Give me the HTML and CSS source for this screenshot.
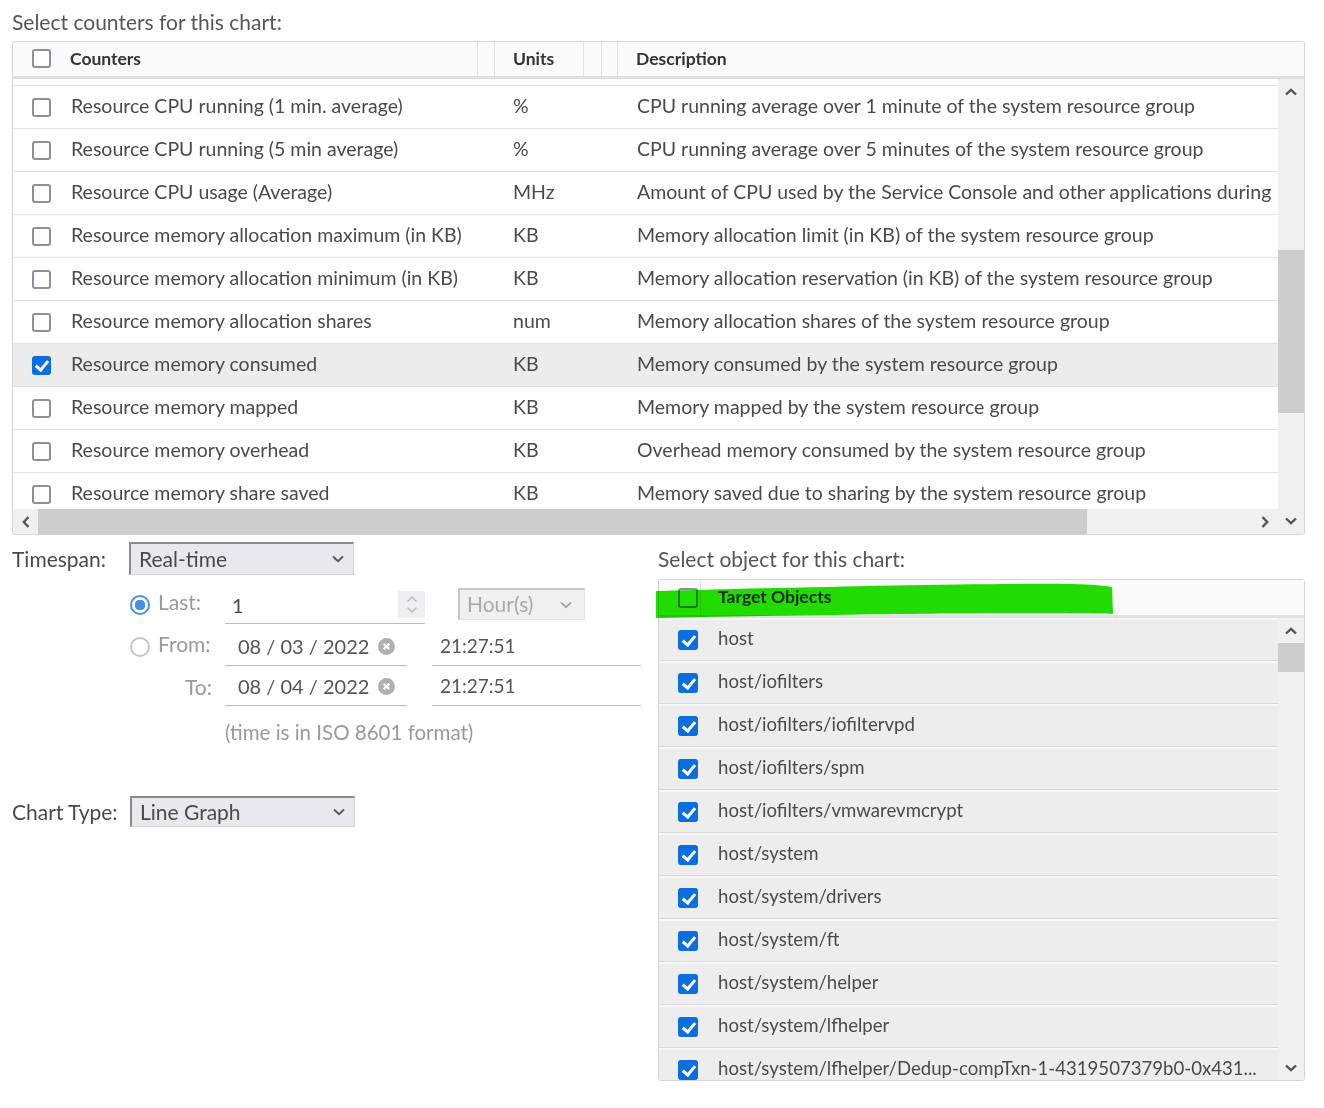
FILE: index.html
```html
<!DOCTYPE html>
<html lang="en">
<head>
    <meta charset="UTF-8">
    <title>Chart Options</title>
    <link rel="stylesheet" href="styles.css">
</head>
<body>
<div class="page">
    <p class="caption">Select counters for this chart:</p>

    <div class="counters">
        <div class="grid-head">
            <div class="hc hc-name"><span class="cb"></span>Counters</div>
            <div class="hc hc-gap1"></div>
            <div class="hc hc-units">Units</div>
            <div class="hc hc-gap2"></div>
            <div class="hc hc-gap3"></div>
            <div class="hc hc-desc">Description</div>
        </div>
        <div class="grid-main">
            <div class="grid-view">
                <div class="grid-rows">
                    <div class="row"><span class="cb"></span><span class="c-name">Resource CPU running (1 min. average)</span><span class="c-unit">%</span><span class="c-desc">CPU running average over 1 minute of the system resource group</span></div>
                    <div class="row"><span class="cb"></span><span class="c-name">Resource CPU running (5 min average)</span><span class="c-unit">%</span><span class="c-desc">CPU running average over 5 minutes of the system resource group</span></div>
                    <div class="row"><span class="cb"></span><span class="c-name">Resource CPU usage (Average)</span><span class="c-unit">MHz</span><span class="c-desc">Amount of CPU used by the Service Console and other applications during</span></div>
                    <div class="row"><span class="cb"></span><span class="c-name">Resource memory allocation maximum (in KB)</span><span class="c-unit">KB</span><span class="c-desc">Memory allocation limit (in KB) of the system resource group</span></div>
                    <div class="row"><span class="cb"></span><span class="c-name">Resource memory allocation minimum (in KB)</span><span class="c-unit">KB</span><span class="c-desc">Memory allocation reservation (in KB) of the system resource group</span></div>
                    <div class="row"><span class="cb"></span><span class="c-name">Resource memory allocation shares</span><span class="c-unit">num</span><span class="c-desc">Memory allocation shares of the system resource group</span></div>
                    <div class="row sel"><span class="cb on"></span><span class="c-name">Resource memory consumed</span><span class="c-unit">KB</span><span class="c-desc">Memory consumed by the system resource group</span></div>
                    <div class="row"><span class="cb"></span><span class="c-name">Resource memory mapped</span><span class="c-unit">KB</span><span class="c-desc">Memory mapped by the system resource group</span></div>
                    <div class="row"><span class="cb"></span><span class="c-name">Resource memory overhead</span><span class="c-unit">KB</span><span class="c-desc">Overhead memory consumed by the system resource group</span></div>
                    <div class="row"><span class="cb"></span><span class="c-name">Resource memory share saved</span><span class="c-unit">KB</span><span class="c-desc">Memory saved due to sharing by the system resource group</span></div>
                </div>
                <div class="hscroll">
                    <div class="sb-arrow"><svg width="8" height="12" viewBox="0 0 8 12"><path d="M6.5 1 L1.8 6 L6.5 11" fill="none" stroke="#555" stroke-width="2.4"/></svg></div>
                    <div class="hs-thumb"></div>
                    <div class="hs-track"></div>
                    <div class="sb-arrow"><svg width="8" height="12" viewBox="0 0 8 12"><path d="M1.5 1 L6.2 6 L1.5 11" fill="none" stroke="#555" stroke-width="2.4"/></svg></div>
                </div>
            </div>
            <div class="vscroll counters-vs">
                <div class="sb-arrow"><svg width="12" height="8" viewBox="0 0 12 8"><path d="M1 6.5 L6 1.8 L11 6.5" fill="none" stroke="#555" stroke-width="2.4"/></svg></div>
                <div class="vs-track"><div class="vs-thumb"></div></div>
                <div class="sb-arrow"><svg width="12" height="8" viewBox="0 0 12 8"><path d="M1 1.5 L6 6.2 L11 1.5" fill="none" stroke="#555" stroke-width="2.4"/></svg></div>
            </div>
        </div>
    </div>

    <div class="lower">
        <div class="left">
            <div class="ts-row">
                <span class="lbl">Timespan:</span>
                <div class="select">Real-time<svg width="12" height="8" viewBox="0 0 12 8"><path d="M1 1.5 L6 6.2 L11 1.5" fill="none" stroke="#555" stroke-width="1.8"/></svg></div>
            </div>

            <div class="opt-row last-row">
                <div class="opt"><span class="radio on"></span><span class="opt-lbl up">Last:</span></div>
                <div class="field num">
                    <span class="val">1</span>
                    <span class="spin">
                        <svg width="12" height="8" viewBox="0 0 12 8"><path d="M1.5 6.5 L6 2 L10.5 6.5" fill="none" stroke="#b8b8b8" stroke-width="1.4"/></svg>
                        <svg width="12" height="8" viewBox="0 0 12 8"><path d="M1.5 1.5 L6 6 L10.5 1.5" fill="none" stroke="#b8b8b8" stroke-width="1.4"/></svg>
                    </span>
                </div>
                <div class="select hours">Hour(s)<svg width="12" height="8" viewBox="0 0 12 8"><path d="M1 1.5 L6 6.2 L11 1.5" fill="none" stroke="#9a9a9a" stroke-width="1.6"/></svg></div>
            </div>

            <div class="opt-row from-row">
                <div class="opt"><span class="radio"></span><span class="opt-lbl up">From:</span></div>
                <div class="field date"><span class="val">08 / 03 / 2022</span><span class="clear"><svg width="17" height="17" viewBox="0 0 17 17"><circle cx="8.5" cy="8.5" r="8.5" fill="#b0b0b0"/><path d="M5.7 5.7 L11.3 11.3 M11.3 5.7 L5.7 11.3" stroke="#fff" stroke-width="2.2"/></svg></span></div>
                <div class="field time"><span class="val">21:27:51</span></div>
            </div>

            <div class="opt-row to-row">
                <div class="opt to"><span class="opt-lbl">To:</span></div>
                <div class="field date"><span class="val">08 / 04 / 2022</span><span class="clear"><svg width="17" height="17" viewBox="0 0 17 17"><circle cx="8.5" cy="8.5" r="8.5" fill="#b0b0b0"/><path d="M5.7 5.7 L11.3 11.3 M11.3 5.7 L5.7 11.3" stroke="#fff" stroke-width="2.2"/></svg></span></div>
                <div class="field time"><span class="val">21:27:51</span></div>
            </div>

            <p class="note">(time is in ISO 8601 format)</p>

            <div class="ts-row chart-row">
                <span class="lbl">Chart Type:</span>
                <div class="select chart">Line Graph<svg width="12" height="8" viewBox="0 0 12 8"><path d="M1 1.5 L6 6.2 L11 1.5" fill="none" stroke="#555" stroke-width="1.8"/></svg></div>
            </div>
        </div>

        <div class="right">
            <p class="caption obj-caption">Select object for this chart:</p>
            <div class="objects">
                <div class="obj-head">
                    <span class="cb"></span>
                    <span class="obj-sep"></span>
                    <span class="obj-title">Target Objects</span>
                </div>
                <div class="obj-main">
                    <div class="obj-list">
                        <div class="obj-row"><span class="cb on"></span><span class="obj-name">host</span></div>
                        <div class="obj-row"><span class="cb on"></span><span class="obj-name">host/iofilters</span></div>
                        <div class="obj-row"><span class="cb on"></span><span class="obj-name">host/iofilters/iofiltervpd</span></div>
                        <div class="obj-row"><span class="cb on"></span><span class="obj-name">host/iofilters/spm</span></div>
                        <div class="obj-row"><span class="cb on"></span><span class="obj-name">host/iofilters/vmwarevmcrypt</span></div>
                        <div class="obj-row"><span class="cb on"></span><span class="obj-name">host/system</span></div>
                        <div class="obj-row"><span class="cb on"></span><span class="obj-name">host/system/drivers</span></div>
                        <div class="obj-row"><span class="cb on"></span><span class="obj-name">host/system/ft</span></div>
                        <div class="obj-row"><span class="cb on"></span><span class="obj-name">host/system/helper</span></div>
                        <div class="obj-row"><span class="cb on"></span><span class="obj-name">host/system/lfhelper</span></div>
                        <div class="obj-row"><span class="cb on"></span><span class="obj-name">host/system/lfhelper/Dedup-compTxn-1-4319507379b0-0x431...</span></div>
                    </div>
                    <div class="vscroll obj-vs">
                        <div class="sb-arrow"><svg width="12" height="8" viewBox="0 0 12 8"><path d="M1 6.5 L6 1.8 L11 6.5" fill="none" stroke="#555" stroke-width="2.4"/></svg></div>
                        <div class="vs-track"><div class="vs-thumb"></div></div>
                        <div class="sb-arrow"><svg width="12" height="8" viewBox="0 0 12 8"><path d="M1 1.5 L6 6.2 L11 1.5" fill="none" stroke="#555" stroke-width="2.4"/></svg></div>
                    </div>
                </div>
                <svg class="marker" width="460" height="36" viewBox="0 0 460 36"><path d="M1 8 C 120 5, 300 0, 410 1 C 430 1, 445 2, 457 4 L 458 31 C 420 30, 300 30, 180 32 C 100 33, 40 34, 1 35 Z" fill="#22e000"/></svg>
            </div>
        </div>
    </div>
</div>
</body>
</html>
```

FILE: styles.css
```css
*{margin:0;padding:0;box-sizing:border-box;}
body{font-family:"Lato","Open Sans",sans-serif;font-size:19px;color:#4a4a4a;background:#fff;}
.page{width:1305px;padding-left:12px;}

.caption{height:24px;line-height:24px;margin-top:10px;margin-bottom:7px;font-size:21px;color:#565656;}

/* checkbox */
.cb{position:relative;display:inline-block;flex:none;width:19px;height:19px;border:2px solid #8f8f9b;border-radius:3px;background:#fff;}
.cb.on{background:#0a6ee0;border-color:#0a6ee0;}
.cb.on::after{content:"";position:absolute;left:4px;top:0px;width:5px;height:10px;border:solid #fff;border-width:0 3px 3px 0;transform:rotate(40deg);}

/* counters grid */
.counters{height:494px;border:1px solid #d6d6d6;border-radius:3px;display:flex;flex-direction:column;overflow:hidden;}
.grid-head{flex:none;display:flex;height:37px;border-bottom:3px solid #dedede;background:#fafafa;font-size:17.5px;font-weight:700;color:#333;}
.hc{display:flex;align-items:center;padding-bottom:2px;border-right:1px solid #e3e3e3;}
.hc-name{width:465px;}
.hc-name .cb{margin:0 19px 0 19px;}
.hc-gap1{width:17px;}
.hc-units{width:89px;padding-left:18px;}
.hc-gap2{width:18px;}
.hc-gap3{width:16px;}
.hc-desc{flex:1;padding-left:18px;border-right:none;}

.grid-main{flex:1;display:flex;min-height:0;}
.grid-view{flex:1;display:flex;flex-direction:column;min-width:0;}
.grid-rows{flex:1;overflow:hidden;padding-top:6px;}
.row{display:flex;align-items:center;height:43px;padding-bottom:3px;border-top:1px solid #e2e2e2;white-space:nowrap;font-size:19.5px;}
.row .cb{margin:3px 20px 0 19px;}
.row.sel{background:#ececec;}
.c-name{flex:none;width:442px;}
.c-unit{flex:none;width:124px;}
.c-desc{flex:none;}

/* scrollbars */
.sb-arrow{flex:none;display:flex;align-items:center;justify-content:center;}
.hscroll{flex:none;height:25px;display:flex;background:#f0f0f0;}
.hscroll .sb-arrow{width:25px;}
.hscroll .sb-arrow:last-child{width:26px;}
.hs-thumb{width:1049px;background:#cdcdcd;}
.hs-track{flex:1;}
.vscroll{flex:none;width:26px;display:flex;flex-direction:column;background:#f0f0f0;}
.vscroll .sb-arrow{height:26px;}
.vs-track{flex:1;}
.counters-vs .vs-track{padding-top:145px;}
.counters-vs .vs-thumb{height:163px;background:#cdcdcd;}
.obj-vs .sb-arrow{height:25px;}
.obj-vs .vs-thumb{height:29px;background:#cdcdcd;}

/* lower part */
.lower{display:flex;gap:17px;}
.left{width:629px;}
.right{width:647px;}

.ts-row{display:flex;align-items:center;height:33px;margin-top:7px;font-size:21px;}
.lbl{width:117px;flex:none;color:#4a4a4a;}
.select{display:flex;align-items:center;justify-content:space-between;width:225px;height:33px;padding:0 9px 2px 8px;background:#e9e9ed;border-top:2px solid #8b8b8b;border-left:2px solid #8b8b8b;border-right:1px solid #d6d6d6;border-bottom:1px solid #d6d6d6;color:#4a4a4a;}
.select svg{margin-top:2px;}

.opt-row{display:flex;height:38px;margin-left:118px;font-size:20px;}
.last-row{margin-top:11px;}
.from-row{margin-top:4px;}
.to-row{margin-top:2px;}
.opt{width:95px;flex:none;display:flex;align-items:center;color:#9a9a9a;font-size:21px;}
.opt.to{justify-content:flex-end;padding-right:13px;padding-bottom:2px;}
.opt-lbl.up{padding-bottom:8px;}
.radio{flex:none;width:20px;height:20px;margin-right:8px;border:2px solid #c4c4c4;border-radius:50%;background:#fff;}
.radio.on{border-color:#4a90e2;background:radial-gradient(circle,#4a90e2 0 5px,#fff 5.5px);}

.field{display:flex;align-items:center;padding-bottom:2px;border-bottom:1px solid #bdbdbd;color:#555;}
.num{width:200px;padding-left:7px;}
.num .val{color:#4a4a4a;padding-top:2px;}
.spin{margin-left:auto;align-self:flex-start;margin-top:5px;width:27px;height:27px;background:#efeff1;display:flex;flex-direction:column;align-items:center;justify-content:center;gap:3px;}
.select.hours{width:127px;height:32px;margin:2px 0 0 33px;padding:0 12px 2px 7px;font-size:21px;background:#f0f0f0;border-top-color:#c6c6c6;border-left-color:#c6c6c6;border-right-color:#e2e2e2;border-bottom-color:#e2e2e2;color:#a9a9a9;}
.date{width:182px;padding-left:13px;padding-right:12px;}
.clear{margin-left:auto;display:flex;margin-top:2px;}
.time{width:209px;margin-left:25px;padding-left:8px;font-size:19px;}

.note{margin:14px 0 0 213px;height:24px;line-height:24px;font-size:20.5px;color:#9a9a9a;}
.chart-row{margin-top:52px;height:31px;}
.chart-row .lbl{width:118px;}
.select.chart{height:31px;}

/* objects */
.obj-caption{margin-top:12px;margin-bottom:8px;}
.objects{position:relative;height:502px;border:1px solid #d6d6d6;border-radius:3px;display:flex;flex-direction:column;}
.obj-head{flex:none;display:flex;align-items:stretch;height:38px;border-bottom:3px solid #e0e0e0;background:#fafafa;font-size:17.5px;font-weight:700;color:#333;}
.obj-head .cb{width:20px;height:20px;margin:8px 0 0 19px;}
.obj-sep{width:1px;margin-left:2px;background:#e3e3e3;}
.obj-title{display:flex;align-items:center;padding:0 0 3px 17px;}
.obj-main{flex:1;display:flex;min-height:0;}
.obj-list{flex:1;min-width:0;overflow:hidden;}
.obj-row{display:flex;align-items:center;height:43px;padding:0 20px 4px 19px;background:#ededed;border-top:2px solid #f7f7f7;border-bottom:1px solid #d9d9d9;white-space:nowrap;font-size:18.6px;}
.obj-row .cb{width:20px;height:20px;margin:4px 20px 0 0;}
.obj-row .cb.on::after{left:5px;top:1px;}
.obj-name{overflow:hidden;text-overflow:ellipsis;}
.marker{position:absolute;left:-4px;top:3px;mix-blend-mode:multiply;}
```
